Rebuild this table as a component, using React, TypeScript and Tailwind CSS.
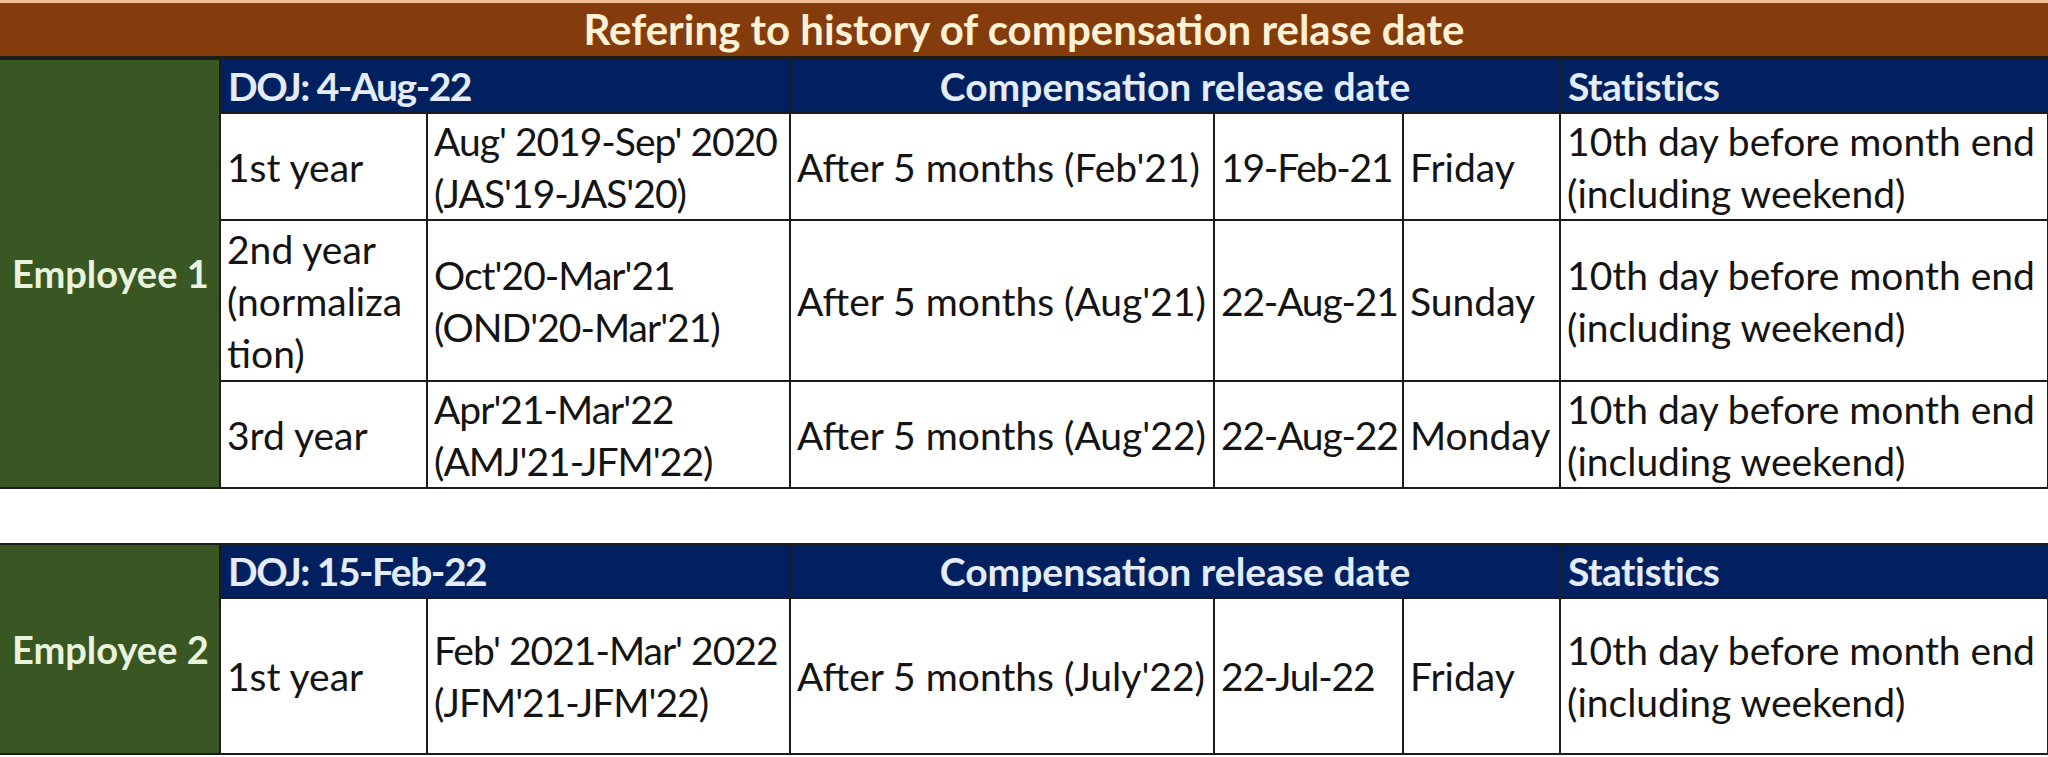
import React from "react";

type Row = {
    year: React.ReactNode;
    period: React.ReactNode;
    after: string;
    date: string;
    day: string;
    height: string;
};

const stats = (
    <>
        10th day before month end
        <br />
        (including weekend)
    </>
);

const emp1Rows: Row[] = [
    {
        year: "1st year",
        period: (
            <>
                Aug' 2019-Sep' 2020
                <br />
                (JAS'19-JAS'20)
            </>
        ),
        after: "After 5 months (Feb'21)",
        date: "19-Feb-21",
        day: "Friday",
        height: "h-[107px]",
    },
    {
        year: (
            <>
                2nd year
                <br />
                (normaliza
                <br />
                tion)
            </>
        ),
        period: (
            <>
                Oct'20-Mar'21
                <br />
                (OND'20-Mar'21)
            </>
        ),
        after: "After 5 months (Aug'21)",
        date: "22-Aug-21",
        day: "Sunday",
        height: "h-[161px]",
    },
    {
        year: "3rd year",
        period: (
            <>
                Apr'21-Mar'22
                <br />
                (AMJ'21-JFM'22)
            </>
        ),
        after: "After 5 months (Aug'22)",
        date: "22-Aug-22",
        day: "Monday",
        height: "h-[107px]",
    },
];

const emp2Rows: Row[] = [
    {
        year: "1st year",
        period: (
            <>
                Feb' 2021-Mar' 2022
                <br />
                (JFM'21-JFM'22)
            </>
        ),
        after: "After 5 months (July'22)",
        date: "22-Jul-22",
        day: "Friday",
        height: "h-[156px]",
    },
];

const td = "border-2 border-[#1c1c1c] px-[6px] align-middle text-[#141414] leading-[52px] whitespace-nowrap";
const head = "border-2 border-[#1c1c1c] bg-[#002060] px-[7px] font-bold text-[#e4ecf7] leading-[50px]";

const Cols = () => (
    <colgroup>
        <col className="w-[220px]" />
        <col className="w-[207px]" />
        <col className="w-[363px]" />
        <col className="w-[424px]" />
        <col className="w-[189px]" />
        <col className="w-[157px]" />
        <col className="w-[488px]" />
    </colgroup>
);

const EmployeeTable = ({ name, doj, rows }: { name: string; doj: string; rows: Row[] }) => (
    <table className="w-[2048px] table-fixed border-collapse">
        <Cols />
        <tbody>
            <tr className="h-[54px]">
                <td
                    rowSpan={rows.length + 1}
                    className="border-2 border-l-0 border-[#1c1c1c] bg-[#385723] pl-[12px] align-middle text-[38px] font-bold text-[#eaf3dc] whitespace-nowrap"
                >
                    {name}
                </td>
                <td colSpan={2} className={`${head} tracking-[-1.5px]`}>
                    DOJ: {doj}
                </td>
                <td colSpan={3} className={`${head} text-center`}>
                    Compensation release date
                </td>
                <td className={`${head} tracking-[-0.5px]`}>Statistics</td>
            </tr>
            {rows.map((r, i) => (
                <tr key={i} className={r.height}>
                    <td className={td}>{r.year}</td>
                    <td className={`${td} tracking-[-1px]`}>{r.period}</td>
                    <td className={td}>{r.after}</td>
                    <td className={`${td} tracking-[-1.2px]`}>{r.date}</td>
                    <td className={td}>{r.day}</td>
                    <td className={td}>{stats}</td>
                </tr>
            ))}
        </tbody>
    </table>
);

export default function App() {
    return (
        <div className="w-[2048px] h-[757px] overflow-hidden bg-white font-['Lato','Open_Sans',sans-serif] text-[39px]">
            <div className="flex h-[58px] items-center justify-center border-t-[3px] border-b-2 border-t-[#f2c19a] border-b-[#1c1c1c] bg-[#843c0c] text-[42px] font-bold text-[#fdf2d6]">
                Refering to history of compensation relase date
            </div>
            <EmployeeTable name="Employee 1" doj="4-Aug-22" rows={emp1Rows} />
            <div className="h-[54px]" />
            <EmployeeTable name="Employee 2" doj="15-Feb-22" rows={emp2Rows} />
        </div>
    );
}
